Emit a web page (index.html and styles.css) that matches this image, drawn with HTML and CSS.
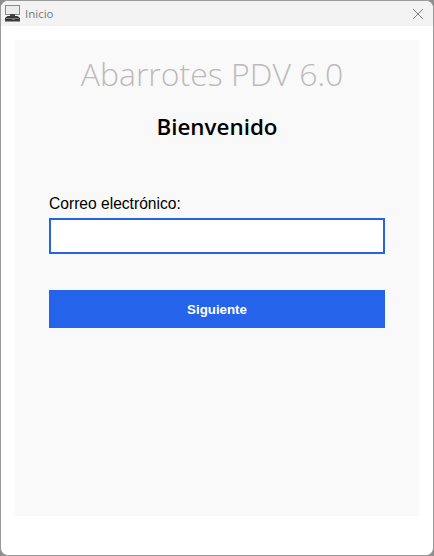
FILE: index.html
```html
<!DOCTYPE html>
<html lang="en">
<head>
    <meta charset="UTF-8">
    <title>Inicio</title>
    <link rel="stylesheet" href="styles.css">
</head>
<body>
    <div class="window">
        <div class="titlebar">
            <svg class="app-icon" width="17" height="17" viewBox="0 0 17 17">
                <rect x="1.5" y="0.5" width="14" height="9" fill="#ececec" stroke="#8a8a8a"/>
                <rect x="6" y="9" width="5" height="2" fill="#444"/>
                <path d="M3.5 11h10l2.5 2v3H1v-3z" fill="#3a3a3a"/>
                <rect x="2" y="13" width="13" height="1" fill="#777"/>
                <rect x="8" y="14" width="3" height="1" fill="#a55"/>
                <rect x="1" y="16" width="15" height="1" fill="#999"/>
            </svg>
            <span class="title">Inicio</span>
            <svg class="close-icon" width="12" height="12" viewBox="0 0 12 12">
                <path d="M1 1l10 10M11 1L1 11" stroke="#808080" stroke-width="1" fill="none"/>
            </svg>
        </div>
        <div class="content">
            <div class="panel">
                <h1 class="brand">Abarrotes PDV 6.0</h1>
                <h2 class="welcome">Bienvenido</h2>
                <form class="login-form">
                    <label for="email">Correo electrónico:</label>
                    <input type="text" id="email">
                    <button type="submit">Siguiente</button>
                </form>
            </div>
        </div>
    </div>
</body>
</html>
```

FILE: styles.css
```css
html, body {
    margin: 0;
    height: 100%;
    background-color: #8f8f8f;
}
.window {
    box-sizing: border-box;
    height: 556px;
    display: flex;
    flex-direction: column;
    background: white;
    border: 1px solid #9a9a9a;
    border-radius: 8px;
    overflow: hidden;
}
.titlebar {
    display: flex;
    align-items: center;
    height: 25px;
    flex-shrink: 0;
    padding: 0 9px 0 3px;
    background-color: #f3f3f3;
}
.app-icon {
    margin-right: 4px;
}
.title {
    flex: 1;
    font-family: "Open Sans", sans-serif;
    font-size: 11.5px;
    color: #777777;
}
.content {
    flex: 1;
    padding: 14px 14px 39px;
    display: flex;
}
.panel {
    flex: 1;
    background-color: #f9f9f9;
    padding: 0 34px;
}
.brand {
    margin: 14px 10px 0 0;
    font-family: "Open Sans", sans-serif;
    font-weight: 300;
    font-size: 32px;
    line-height: 40px;
    text-align: center;
    color: #bdb9b9;
}
.welcome {
    margin: 18px 0 0;
    font-family: "Open Sans", sans-serif;
    font-weight: 600;
    font-size: 22.4px;
    line-height: 30px;
    text-align: center;
    color: black;
}
.login-form {
    margin-top: 53px;
}
label {
    display: block;
    font-family: "Liberation Sans", Arial, sans-serif;
    font-size: 15.6px;
    line-height: 18px;
    color: black;
    margin-bottom: 5px;
}
input[type="text"] {
    display: block;
    box-sizing: border-box;
    width: 100%;
    height: 36px;
    background: white;
    border: 2px solid #2563eb;
    outline: none;
    padding: 0 8px;
}
button {
    display: block;
    width: 100%;
    height: 38px;
    margin-top: 36px;
    background-color: #2563eb;
    color: white;
    border: none;
    font-family: "Liberation Sans", Arial, sans-serif;
    font-size: 13.3px;
    font-weight: bold;
    cursor: pointer;
}
```
